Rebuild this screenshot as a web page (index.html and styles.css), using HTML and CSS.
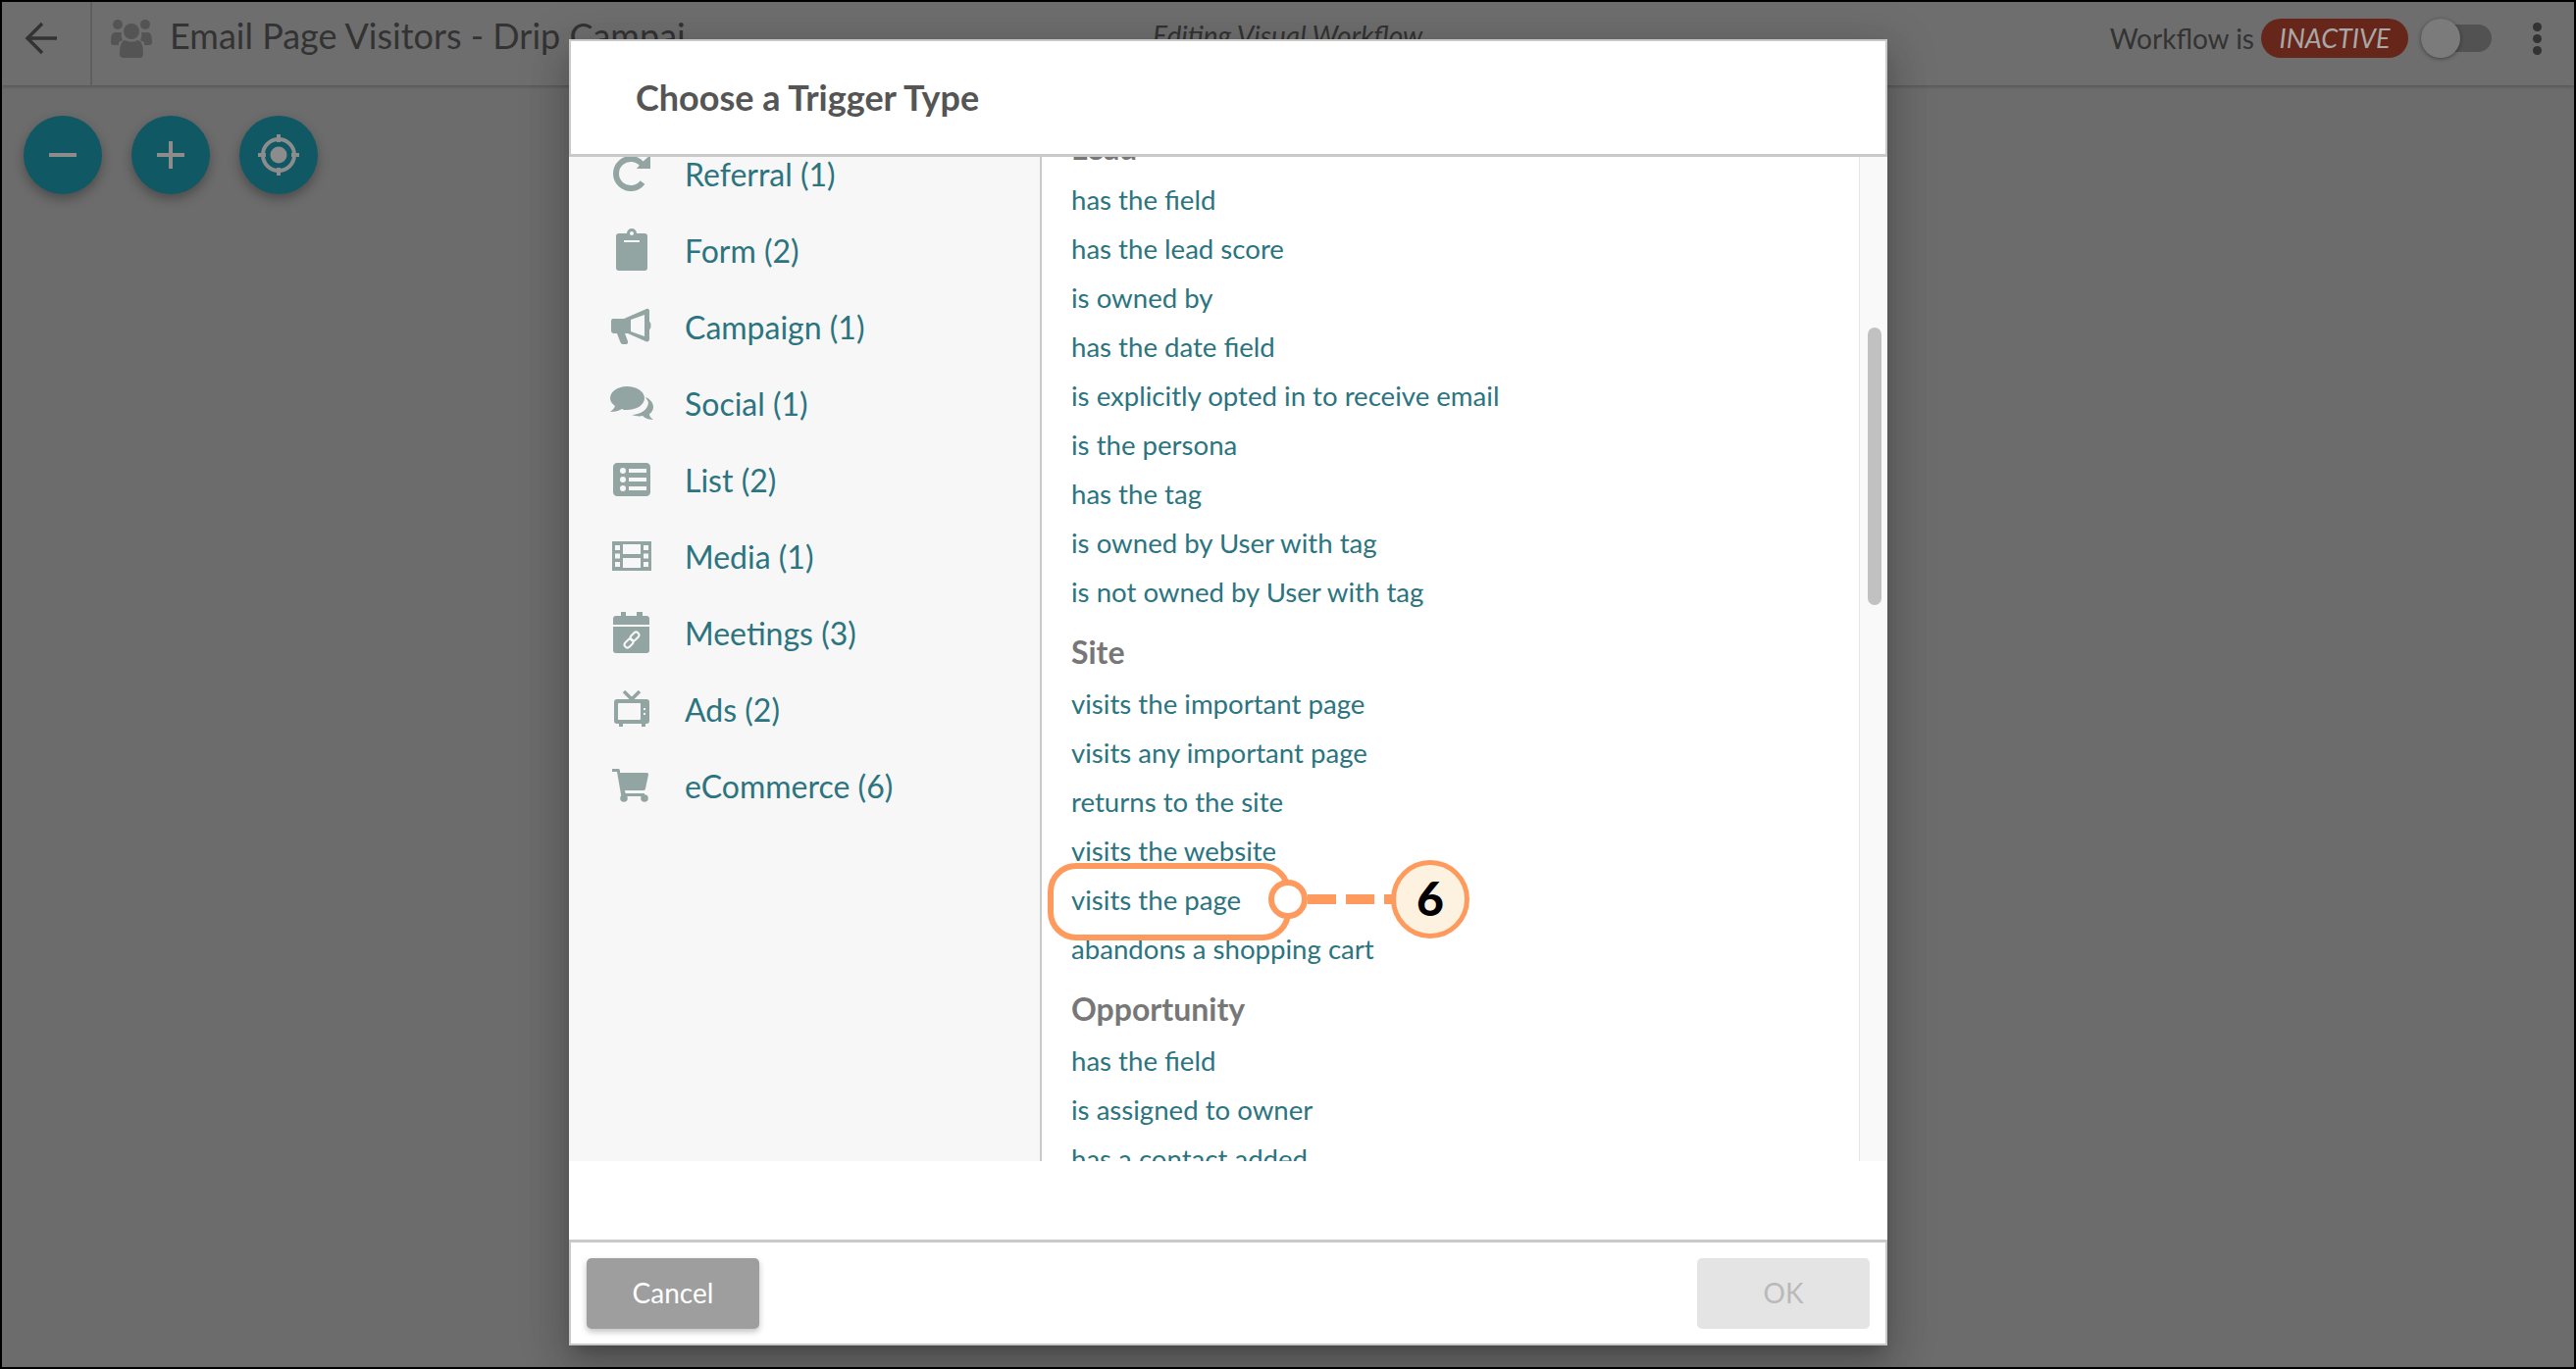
FILE: index.html
```html
<!DOCTYPE html>
<html lang="en">
<head>
<meta charset="utf-8">
<title>Choose a Trigger Type</title>
<link rel="stylesheet" href="styles.css">
</head>
<body>
<div class="page">
  <header class="topbar">
    <button class="back" aria-label="Back">
      <svg width="36" height="36" viewBox="0 0 36 36"><path d="M33 18H3M18 3 3 18l15 15" fill="none" stroke="#333" stroke-width="3.4"/></svg>
    </button>
    <svg class="people" width="42" height="40" viewBox="0 0 42 40">
      <circle cx="7" cy="6" r="5"/><circle cx="35" cy="6" r="5"/>
      <path d="M0 24c0-8 2-10 5-10h6c-1 3 0 6 1 8l-4 2v3H3c-2 0-3-1-3-3zM42 24c0-8-2-10-5-10h-6c1 3 0 6-1 8l4 2v3h5c2 0 3-1 3-3z"/>
      <circle cx="21" cy="13" r="8"/>
      <path d="M9 36c0-9 2-14 6-14 2 2 10 2 12 0 4 0 6 5 6 14 0 3-2 4-4 4H13c-2 0-4-1-4-4z"/>
    </svg>
    <div class="title">Email Page Visitors - Drip Campai</div>
    <div class="editing">Editing Visual Workflow</div>
    <div class="status">
      <span class="status-label">Workflow is</span>
      <span class="pill">INACTIVE</span>
      <span class="switch"><span class="knob"></span></span>
      <span class="kebab"><i></i><i></i><i></i></span>
    </div>
  </header>
  <div class="tools">
    <button class="fab" aria-label="Zoom out"><svg width="40" height="40" viewBox="0 0 40 40"><path d="M6 20h28" stroke="#8c8c8c" stroke-width="4"/></svg></button>
    <button class="fab" aria-label="Zoom in"><svg width="40" height="40" viewBox="0 0 40 40"><path d="M6 20h28M20 6v28" stroke="#8c8c8c" stroke-width="4"/></svg></button>
    <button class="fab" aria-label="Center"><svg width="44" height="44" viewBox="0 0 44 44"><circle cx="22" cy="22" r="16" fill="none" stroke="#8c8c8c" stroke-width="4"/><circle cx="22" cy="22" r="8.5" fill="#8c8c8c"/><path d="M22 1v8M22 35v8M1 22h8M35 22h8" stroke="#8c8c8c" stroke-width="4"/></svg></button>
  </div>
</div>

<section class="modal">
  <div class="modal-head"><h2>Choose a Trigger Type</h2></div>
  <div class="modal-body">
    <nav class="cats">
      <a class="cat"><svg class="ico" viewBox="0 0 44 44"><path d="M33 31a15 15 0 1 1 0-18" fill="none" stroke-width="6"/><path d="M41 3v14H27l5-6z" /><path d="M28 17h13V6z"/></svg>Referral (1)</a>
      <a class="cat"><svg class="ico" viewBox="0 0 44 44"><path fill-rule="evenodd" d="M9 5h8a5 5 0 0 1 10 0h8c2 0 3 1 3 3v32c0 2-1 3-3 3H9c-2 0-3-1-3-3V8c0-2 1-3 3-3zm5 7v2h16v-2zM22 3a2 2 0 1 0 0 4 2 2 0 0 0 0-4z"/></svg>Form (2)</a>
      <a class="cat"><svg class="ico" viewBox="0 0 44 44"><path fill-rule="evenodd" d="M4 14h10l23-10c2-.8 3 .5 3 2v11c2 .5 2 7 0 8v10c0 2-2 3-4 2L18 29v0h-3l3 8c.6 2-.4 3-2 3h-3c-2 0-2-1-3-3l-3-8H4c-2 0-3-1-3-3v-9c0-3 1-3 3-3zm17 1v12l14 5V10z"/></svg>Campaign (1)</a>
      <a class="cat"><svg class="ico" viewBox="0 0 44 44"><path d="M36 16c5 2 8 6 8 10 0 3-2 6-4 7 0 2 1 4 4 6-3 0-8-1-11-4-3 1-8 0-11-1 8 0 17-5 17-13z"/><path d="M17 5c10 0 18 5 18 12s-8 12-18 12c-2 0-4 0-5-1-3 2-7 3-12 3 2-2 4-3 5-6-3-2-5-5-5-8C0 10 8 5 17 5z"/></svg>Social (1)</a>
      <a class="cat"><svg class="ico" viewBox="0 0 44 44"><path fill-rule="evenodd" d="M7 5h30c2 0 4 2 4 4v26c0 2-2 4-4 4H7c-2 0-4-2-4-4V9c0-2 2-4 4-4zm6 5a3 3 0 1 0 0 6 3 3 0 0 0 0-6zm0 9a3 3 0 1 0 0 6 3 3 0 0 0 0-6zm0 9a3 3 0 1 0 0 6 3 3 0 0 0 0-6zm6-17v4h18v-4zm0 9v4h18v-4zm0 9v4h18v-4z"/></svg>List (2)</a>
      <a class="cat"><svg class="ico" viewBox="0 0 44 44"><path fill-rule="evenodd" d="M2 7h40v30H2zm3 4v5h5v-5zm0 8.500v5h5v-5zm0 8.500v5h5v-5zm29-17v5h5v-5zm0 8.500v5h5v-5zm0 8.500v5h5v-5zM13 10v10h18V10zm0 14v10h18V24z"/></svg>Media (1)</a>
      <a class="cat"><svg class="ico" viewBox="0 0 44 44"><path d="M11 1h5v4h11V1h6v4h4c2 0 3 1 3 3v6H3V8c0-2 1-3 3-3h5z"/><path d="M3 16h37v24c0 2-1 3-3 3H6c-2 0-3-1-3-3z"/><g class="ico-link"><rect x="14" y="30" width="10" height="6" rx="3" transform="rotate(-45 19 33)"/><rect x="20" y="23" width="10" height="6" rx="3" transform="rotate(-45 25 26)"/></g></svg>Meetings (3)</a>
      <a class="cat"><svg class="ico" viewBox="0 0 44 44"><path d="M14 4l8 8 8-8" fill="none" stroke-width="3.500"/><path fill-rule="evenodd" d="M7 12h30c2 0 3 1 3 3v19c0 2-1 3-3 3h-1v3h-4v-3H13v3H9v-3H7c-2 0-3-1-3-3V15c0-2 1-3 3-3zm2 4c-.6 0-1 .4-1 1v15c0 .6.4 1 1 1h21c.6 0 1-.4 1-1V17c0-.6-.4-1-1-1zm25 5v2h2v-2zm0 5v2h2v-2z"/></svg>Ads (2)</a>
      <a class="cat"><svg class="ico" viewBox="0 0 44 44"><path d="M2 5h6c1 0 2 .6 2 2v2h27c2 0 2 1 2 2l-3 14c0 1-1 2-2 2H15l.6 3H35v3H13c-1 0-2-1-2-2L7 8H2z"/><circle cx="14" cy="35" r="3.800"/><circle cx="35" cy="35" r="3.800"/></svg>eCommerce (6)</a>
    </nav>
    <div class="triggers">
      <div class="trigger-list">
        <h3>Lead</h3>
        <a>has the field</a>
        <a>has the lead score</a>
        <a>is owned by</a>
        <a>has the date field</a>
        <a>is explicitly opted in to receive email</a>
        <a>is the persona</a>
        <a>has the tag</a>
        <a>is owned by User with tag</a>
        <a>is not owned by User with tag</a>
        <h3>Site</h3>
        <a>visits the important page</a>
        <a>visits any important page</a>
        <a>returns to the site</a>
        <a>visits the website</a>
        <a>visits the page</a>
        <a>abandons a shopping cart</a>
        <h3>Opportunity</h3>
        <a>has the field</a>
        <a>is assigned to owner</a>
        <a>has a contact added</a>
      </div>
    </div>
    <div class="track"><div class="thumb"></div></div>
  </div>
  <div class="modal-gap"></div>
  <div class="modal-foot">
    <button class="btn btn-cancel">Cancel</button>
    <button class="btn btn-ok">OK</button>
  </div>
</section>

<svg class="callout" width="440" height="100" viewBox="0 0 440 100">
  <rect x="11" y="13" width="242" height="73" rx="26" fill="none" stroke="#ff9a5e" stroke-width="6"/>
  <path d="M273 47h86" stroke="#ff9a5e" stroke-width="10" stroke-dasharray="29 10"/>
  <circle cx="253" cy="47" r="17" fill="#fff" stroke="#ff9a5e" stroke-width="6"/>
  <circle cx="398" cy="47" r="37.500" fill="#fdf1df" stroke="#ff9a5e" stroke-width="5"/>
  <text class="callout-num" x="398" y="64" text-anchor="middle">6</text>
</svg>
</body>
</html>
```
FILE: styles.css
```css
* { box-sizing: border-box; }
html, body { margin: 0; padding: 0; height: 100%; }
body {
  font-family: Lato, "Liberation Sans", sans-serif;
  background: #000;
  overflow: hidden;
}
button { font-family: inherit; border: 0; padding: 0; }

.page {
  width: 2626px;
  height: 1396px;
  border: 2px solid #000;
  background: #6c6c6c;
}

.topbar {
  height: 85px;
  padding-bottom: 11px;
  display: flex;
  align-items: center;
  background: #6e6e6e;
  box-shadow: 0 2px 3px rgba(0, 0, 0, .18);
  color: #333;
}
.back {
  width: 92px;
  height: 85px;
  margin-top: 11px;
  padding: 0 8px 11px 0;
  background: none;
  border-right: 2px solid #5f5f5f;
  display: flex;
  align-items: center;
  justify-content: center;
}
.people { margin-left: 19px; fill: #545454; flex: none; }
.title { margin: 0 0 6px 18px; font-size: 36px; white-space: nowrap; width: 640px; }
.editing { margin: 0 0 6px 362px; font-size: 28px; font-style: italic; white-space: nowrap; }
.status { margin-left: auto; display: flex; align-items: center; }
.status-label { font-size: 28px; }
.pill {
  margin-left: 7px;
  height: 40px;
  width: 150px;
  border-radius: 20px;
  background: #66261a;
  color: #a8a8a8;
  font-size: 27px;
  font-style: italic;
  line-height: 40px;
  text-align: center;
}
.switch {
  position: relative;
  margin-left: 13px;
  width: 72px;
  height: 28px;
  border-radius: 14px;
  background: #525252;
}
.knob {
  position: absolute;
  left: 0;
  top: -6px;
  width: 40px;
  height: 40px;
  border-radius: 50%;
  background: #7b7b7b;
  box-shadow: 0 1px 4px rgba(0, 0, 0, .4);
}
.kebab {
  margin-left: 42px;
  margin-right: 33px;
  display: flex;
  flex-direction: column;
  gap: 3px;
}
.kebab i { display: block; width: 9px; height: 9px; border-radius: 50%; background: #333; }

.tools { display: flex; gap: 30px; padding: 31px 0 0 22px; }
.fab {
  width: 80px;
  height: 80px;
  border-radius: 50%;
  background: #0f5864;
  box-shadow: 0 5px 12px rgba(0, 0, 0, .3);
  display: flex;
  align-items: center;
  justify-content: center;
}

.modal {
  position: absolute;
  left: 580px;
  top: 40px;
  width: 1344px;
  height: 1332px;
  display: flex;
  flex-direction: column;
  background: #fff;
  box-shadow: 0 11px 15px -7px rgba(0, 0, 0, .2), 0 24px 38px 3px rgba(0, 0, 0, .14), 0 9px 46px 8px rgba(0, 0, 0, .12);
}
.modal-head {
  height: 120px;
  border: 2px solid #c9c9c9;
  border-bottom-width: 3px;
  display: flex;
  align-items: center;
  padding: 0 0 2px 66px;
}
.modal-head h2 { margin: 0; font-size: 36px; font-weight: 700; color: #555; }

.modal-body { height: 1024px; display: flex; overflow: hidden; }
.cats {
  width: 482px;
  flex: none;
  background: #f7f7f7;
  border-right: 2px solid #c9c9c9;
  padding-left: 42px;
  overflow: hidden;
}
.cat {
  display: flex;
  align-items: center;
  height: 78px;
  font-size: 32px;
  color: #2b7480;
}
.cat:first-child { margin-top: -22px; }
.ico { width: 44px; height: 44px; margin-right: 32px; flex: none; fill: #93a5a2; stroke: none; }
.ico path[stroke-width] { stroke: #93a5a2; }
.ico-link rect { fill: none; stroke: #f7f7f7; stroke-width: 2; }

.triggers { flex: 1; overflow: hidden; }
.trigger-list { margin-top: -45px; padding-left: 30px; }
.trigger-list h3 {
  margin: 12px 0 2px;
  font-size: 32px;
  line-height: 48px;
  height: 50px;
  font-weight: 700;
  color: #777;
}
.trigger-list a {
  display: block;
  height: 50px;
  line-height: 50px;
  font-size: 27.6px;
  color: #2b7480;
  white-space: nowrap;
}
.track {
  width: 29px;
  flex: none;
  background: #f9f9f9;
  border-left: 1px solid #e6e6e6;
  padding: 174px 0 0 8px;
}
.thumb { width: 14px; height: 283px; border-radius: 7px; background: #c1c1c1; }

.modal-gap { height: 80px; }
.modal-foot {
  height: 108px;
  border: 2px solid #c9c9c9;
  border-top-width: 3px;
  display: flex;
  justify-content: space-between;
  align-items: center;
  padding: 0 16px;
}
.btn { width: 176px; height: 72px; border-radius: 5px; font-size: 28px; padding-bottom: 2px; }
.btn-cancel { background: #9e9e9e; color: #fff; box-shadow: 0 3px 6px rgba(0, 0, 0, .25); }
.btn-ok { background: #e4e4e4; color: #b9b9b9; }

.callout { position: absolute; left: 1060px; top: 870px; }
.callout-num { font-family: Lato, sans-serif; font-size: 48px; font-weight: 900; fill: #000; }
```
